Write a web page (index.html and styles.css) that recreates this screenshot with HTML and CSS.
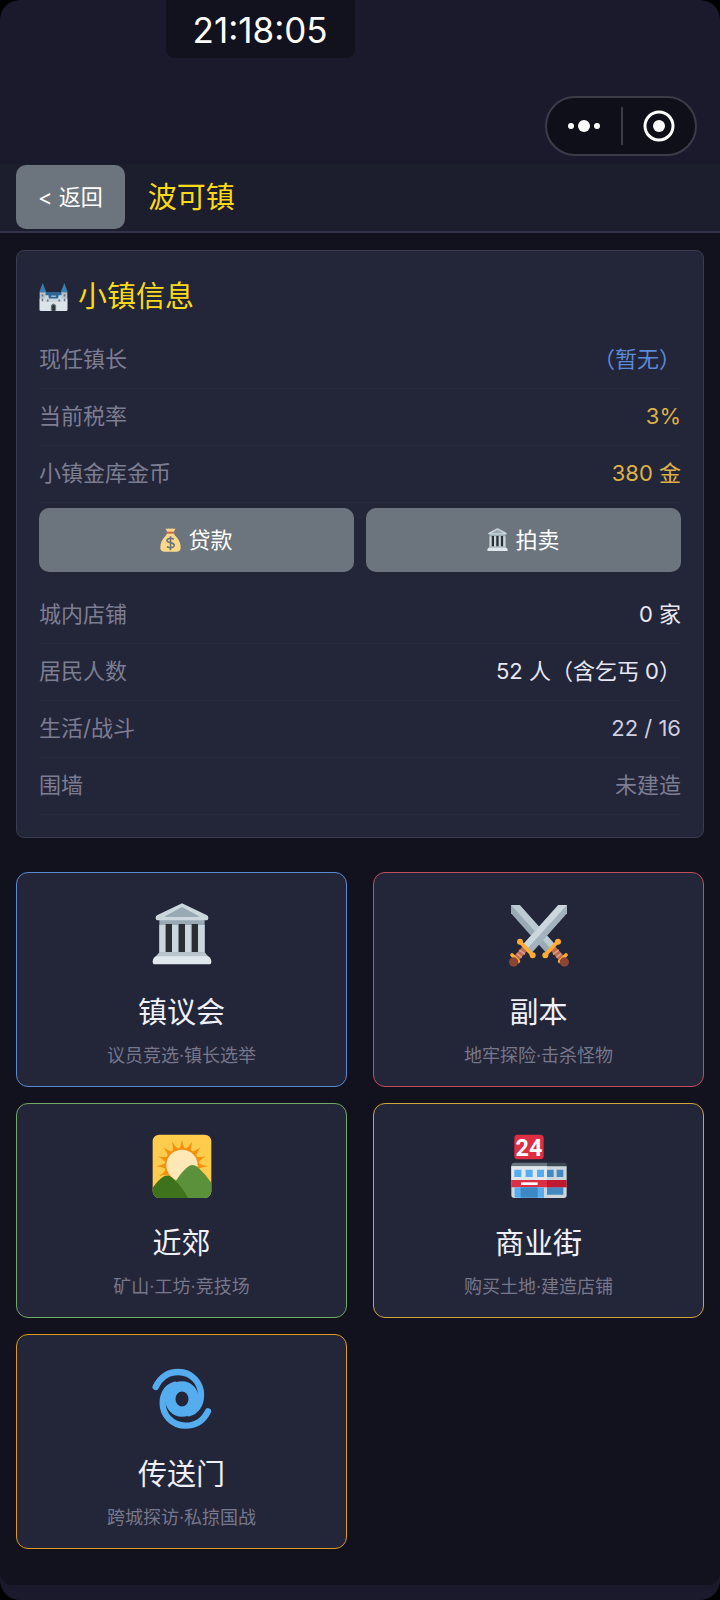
FILE: index.html
```html
<!DOCTYPE html>
<html lang="zh-CN">
<head>
<meta charset="utf-8">
<meta name="viewport" content="width=device-width, initial-scale=1">
<title>波可镇</title>
<link rel="stylesheet" href="styles.css">
</head>
<body>
<svg class="defs" aria-hidden="true">
  <symbol id="hall" viewBox="0 0 180 192" preserveAspectRatio="none">
    <path fill="#99aab5" d="M22 46h136v110H22z"/>
    <path fill="#ccd6dd" d="M22 66h19v82H22zM60 66h19v82H60zM99 66h20v82H99zM138 66h20v82h-20z"/>
    <path fill="#292f33" d="M41 63h19v84H41zM80 63h19v84H80zM119 63h19v84h-19z"/>
    <path fill="#ccd6dd" d="M87 2q3-2 6 0l72 35q4 2 4 7 0 8-7 8H18q-7 0-7-8 0-5 4-7z"/>
    <path fill="#9aaab4" d="M90 12l50 27q2 3-2 3H42q-4 0-2-3z"/>
    <path fill="#b8c5cd" d="M22 148h136l14 16H8z"/>
    <path fill="#e1e8ed" d="M12 160h156q10 6 10 16 0 8-7 8H9q-7 0-7-8 0-10 10-16z"/>
  </symbol>
  <symbol id="swords" viewBox="0 0 180 192" preserveAspectRatio="none">
    <g>
      <path fill="#9aabb5" d="M6 6h26L136 122l-24 28L6 31z"/>
      <path fill="#bccad2" d="M6 6h26L136 122l-12 14z"/>
      <path stroke="#bf6952" stroke-width="19" d="M128 132l33 38"/>
      <path stroke="#d99e82" stroke-width="5" d="M132 154l17-13M142 164l14-13"/>
      <path stroke="#ffac33" stroke-width="11" stroke-linecap="round" d="M109 156l36-39M152 175l19-19"/>
      <circle cx="109" cy="157" r="9" fill="#ffac33"/><circle cx="147" cy="116" r="9" fill="#ffac33"/>
      <circle cx="166" cy="177" r="14" fill="#8a4633"/>
    </g>
    <g transform="matrix(-1 0 0 1 180 0)">
      <path fill="#a3b3bd" d="M6 6h26L136 122l-24 28L6 31z"/>
      <path fill="#ccd6dd" d="M6 6h26L136 122l-12 14z"/>
      <path stroke="#bf6952" stroke-width="19" d="M128 132l33 38"/>
      <path stroke="#d99e82" stroke-width="5" d="M132 154l17-13M142 164l14-13"/>
      <path stroke="#ffac33" stroke-width="11" stroke-linecap="round" d="M109 157l38-41M152 175l19-19"/>
      <circle cx="109" cy="157" r="9" fill="#ffac33"/><circle cx="147" cy="116" r="9" fill="#ffac33"/>
      <circle cx="166" cy="177" r="14" fill="#8a4633"/>
    </g>
  </symbol>
  <symbol id="hills" viewBox="0 0 180 192" preserveAspectRatio="none">
    <clipPath id="tile"><rect x="2" y="2" width="176" height="190" rx="20"/></clipPath>
    <g clip-path="url(#tile)">
      <path fill="#ffcc4d" d="M0 0h180v192H0z"/>
      <g fill="#f4900c">
        <circle cx="90" cy="94" r="52"/>
        <g id="ray4"><path id="ray" d="M79 50q9-16 11-33 2 17 11 33z"/>
        <use href="#ray" transform="rotate(23 90 94)"/><use href="#ray" transform="rotate(46 90 94)"/><use href="#ray" transform="rotate(69 90 94)"/></g>
        <use href="#ray4" transform="rotate(92 90 94)"/><use href="#ray4" transform="rotate(-92 90 94)"/><use href="#ray" transform="rotate(-115 90 94)"/>
      </g>
      <circle cx="90" cy="94" r="47" fill="#ffe8b6"/>
      <path fill="#5c913b" d="M60 160Q88 110 112 95q12-6 25 4 26 24 43 50v43H60z"/>
      <path fill="#3e721d" d="M0 164q20-28 36-37 12-6 25 4 30 28 47 61H0z"/>
    </g>
  </symbol>
  <symbol id="cyclone" viewBox="0 0 180 192" preserveAspectRatio="none">
    <g fill="none" stroke="#55acee">
      <ellipse cx="90" cy="102" rx="35" ry="38" stroke-width="31"/>
      <g stroke-width="19" stroke-linecap="round">
        <path d="M11 66C28 31 56 21 79 21c42 0 68 35 68 68 0 32-16 50-36 56"/>
        <path d="M168 139c-17 34-43 43-67 43-42 0-69-33-69-67 0-32 16-50 36-56"/>
      </g>
    </g>
  </symbol>
  <symbol id="castle" viewBox="0 0 88 88" preserveAspectRatio="none">
    <path fill="#2b6797" d="M14 28h60v22H14z"/>
    <path fill="#3b7fb0" d="M11 0l11 27H1zM77 0l10 27H66z"/>
    <path fill="#b8c5cf" d="M2 28h19v56H2zM67 28h19v56H67z"/>
    <path fill="#dce4ea" d="M2 48h84v32q0 5-5 5H7q-5 0-5-5z"/>
    <path fill="#ccd6dd" d="M19 36h10v7h8v-5h14v5h8v-7h10v22H19z"/>
    <path fill="#2b6797" d="M20 28h48v9H20zM30 42h28v5H30z"/>
    <path fill="#66757f" d="M8 34h5v7H8zM8 48h5v7H8zM75 34h5v7h-5zM75 48h5v7h-5zM24 50h5v6h-5zM59 50h5v6h-5zM36 84V68q8-12 16 0v16z"/>
    <path fill="#292f33" d="M40 84V70q4-6 8 0v14z"/>
  </symbol>
  <symbol id="money" viewBox="0 0 64 72" preserveAspectRatio="none">
    <path fill="#fdd888" d="M22 14h20q1 7 8 13c9 9 13 21 13 32 0 9-7 12-14 12H15C8 71 1 68 1 59c0-11 4-23 13-32q7-6 8-13z"/>
    <path fill="#fdd888" d="M17 1q6 3 10 0 5 3 10 0 5 3 10 0l-5 12H22z"/>
    <path fill="#bf6952" d="M20 11h24v6H20z"/>
    <path fill="none" stroke="#67757f" stroke-width="5" d="M42 34q-10-6-18-1c-5 4-4 9 8 11 14 3 14 10 7 14q-9 3-18-2M32 25v42"/>
  </symbol>
</svg>

<div class="screen">
  <header class="top">
    <div class="status"><time class="clock">21:18:05</time></div>
    <div class="capsule">
      <button class="capsule-btn" type="button" aria-label="更多">
        <svg class="dots" viewBox="0 0 34 16"><circle cx="4" cy="8" r="3"/><circle cx="17" cy="8" r="6"/><circle cx="30" cy="8" r="3"/></svg>
      </button>
      <button class="capsule-btn" type="button" aria-label="关闭">
        <svg class="ring" viewBox="0 0 32 32"><circle cx="16" cy="16" r="14" fill="none" stroke="#fff" stroke-width="3"/><circle cx="16" cy="16" r="6"/></svg>
      </button>
    </div>
    <nav class="bar">
      <button class="btn back" type="button">&lt; 返回</button>
      <h1 class="title">波可镇</h1>
    </nav>
  </header>

  <main class="content">
    <section class="panel">
      <h2 class="title"><svg class="castle"><use href="#castle"/></svg>小镇信息</h2>
      <dl class="rows">
        <div class="row"><dt>现任镇长</dt><dd class="blue">（暂无）</dd></div>
        <div class="row"><dt>当前税率</dt><dd class="gold">3%</dd></div>
        <div class="row"><dt>小镇金库金币</dt><dd class="gold">380 金</dd></div>
      </dl>
      <div class="actions">
        <button class="btn" type="button"><svg class="mini"><use href="#money"/></svg>贷款</button>
        <button class="btn" type="button"><svg class="mini"><use href="#hall"/></svg>拍卖</button>
      </div>
      <dl class="rows">
        <div class="row"><dt>城内店铺</dt><dd>0 家</dd></div>
        <div class="row"><dt>居民人数</dt><dd>52 人（含乞丐 0）</dd></div>
        <div class="row"><dt>生活/战斗</dt><dd class="soft">22 / 16</dd></div>
        <div class="row"><dt>围墙</dt><dd class="muted">未建造</dd></div>
      </dl>
    </section>

    <section class="places">
      <button class="place council" type="button"><svg class="icon"><use href="#hall"/></svg><span class="name">镇议会</span><span class="desc">议员竞选·镇长选举</span></button>
      <button class="place dungeon" type="button"><svg class="icon"><use href="#swords"/></svg><span class="name">副本</span><span class="desc">地牢探险·击杀怪物</span></button>
      <button class="place suburb" type="button"><svg class="icon"><use href="#hills"/></svg><span class="name">近郊</span><span class="desc">矿山·工坊·竞技场</span></button>
      <button class="place market" type="button">
        <svg class="icon" viewBox="0 0 180 192" preserveAspectRatio="none">
          <rect x="16" y="2" width="88" height="74" rx="10" fill="#dd2e44"/>
          <text x="60" y="65" class="store-sign">24</text>
          <path fill="#66757f" d="M7 100V95q0-9 9-9h98v14z"/>
          <path fill="#3b4750" d="M114 86h52q7 0 7 9v5h-59z"/>
          <path fill="#ccd6dd" d="M7 97h107v95H16q-9 0-9-9z"/>
          <path fill="#e1e8ed" d="M7 97h107v42H7z"/>
          <path fill="#ccd6dd" d="M114 97h59v86q0 9-8 9h-51z"/>
          <path fill="#55acee" d="M16 107h21v22H16zM50 107h21v22H50zM84 107h21v22H84z"/>
          <path fill="#4289c1" d="M114 107h20v22h-20zM143 107h20v22h-20zM114 160h49v22h-49z"/>
          <path fill="#dd2e44" d="M7 138h107v22H7z"/>
          <path fill="#be1931" d="M114 138h59v22h-59z"/>
          <path fill="#fff" d="M36 145h50v8H36z"/>
          <path fill="#55acee" d="M17 160h88v31H17z"/>
          <path fill="#3b88c3" d="M35 160h51v31H35z"/>
        </svg>
        <span class="name">商业街</span><span class="desc">购买土地·建造店铺</span></button>
      <button class="place portal" type="button"><svg class="icon"><use href="#cyclone"/></svg><span class="name">传送门</span><span class="desc">跨城探访·私掠国战</span></button>
    </section>
  </main>
</div>
</body>
</html>
```

FILE: styles.css
```css
* { box-sizing: border-box; margin: 0; }

body {
  background: #000;
  color: #e8e8f4;
  font: 22px/32px Inter, "Noto Sans CJK SC", sans-serif;
  text-spacing-trim: space-all;
}

button { font: inherit; color: inherit; cursor: pointer; }

.defs { position: absolute; width: 0; height: 0; }

.screen {
  display: flex;
  flex-direction: column;
  min-height: 100vh;
  padding-bottom: 15px;
  border-radius: 20px;
  overflow: hidden;
  background: #1a1a2c;
}

.top { display: flex; flex-direction: column; }

.status { display: flex; padding-left: 23%; }

.clock {
  padding: 6px 27px 4px;
  border-radius: 0 0 8px 8px;
  background: #12121e;
  color: #fff;
  font-size: 35px;
  line-height: 48px;
}

.capsule {
  display: flex;
  align-self: flex-end;
  align-items: center;
  height: 60px;
  margin: 38px 23px 8px 0;
  border: 2px solid #3c3c48;
  border-radius: 30px;
  background: #0f0f19;
}

.capsule-btn {
  display: flex;
  align-items: center;
  justify-content: center;
  width: 74px;
  height: 38px;
  padding: 0;
  border: 0;
  background: none;
  fill: #fff;
}

.capsule-btn + .capsule-btn { border-left: 2px solid #3c3c48; }
.dots { width: 34px; height: 16px; }
.ring { width: 32px; height: 32px; }

.bar {
  display: flex;
  align-items: center;
  gap: 23px;
  padding: 1px 16px 2px;
  border-bottom: 2px solid #32324a;
  background: #1c1d2d;
}

.title {
  display: flex;
  align-items: center;
  padding-top: 1px;
  color: #fada16;
  font-size: 29px;
  font-weight: 400;
  line-height: 42px;
}

.btn {
  display: flex;
  align-items: center;
  justify-content: center;
  gap: 7px;
  padding: 16px;
  border: 0;
  border-radius: 10px;
  background: #6c757d;
  color: #fff;
}

.back { padding: 16px 22px; }

.content {
  flex: 1;
  padding: 17px 16px 36px;
  border-radius: 0 0 12px 12px;
  background: #12121e;
}

.panel {
  padding: 24px 22px 22px;
  border: 1px solid #3a3a50;
  border-radius: 8px;
  background: #232539;
}

.panel .title { gap: 10px; margin-bottom: 14px; }
.castle { width: 29px; height: 29px; }

.row {
  display: flex;
  align-items: center;
  justify-content: space-between;
  padding: 11px 0 13px;
  border-bottom: 1px solid #282a3d;
}

.row dt, .row .muted { color: #7d7d91; }
.row .blue { color: #5b8ad8; }
.row .gold { color: #deb048; }
.row .soft { color: #cfcfe0; }

.actions {
  display: grid;
  grid-template-columns: 1fr 1fr;
  gap: 12px;
  margin: 5px 0 15px;
}

.mini { width: 21px; height: 24px; }

.places {
  display: grid;
  grid-template-columns: 1fr 1fr;
  gap: 16px 26px;
  margin-top: 34px;
}

.place {
  display: flex;
  flex-direction: column;
  align-items: center;
  padding: 30px 16px 16px;
  border: 1px solid;
  border-radius: 12px;
  background: #232539;
}

.icon { width: 60px; height: 64px; }

.name {
  margin-top: 25px;
  color: #f0f0fa;
  font-size: 29px;
  line-height: 42px;
}

.desc { margin-top: 8px; color: #77778b; font-size: 18px; line-height: 28px; }

.council { border-color: #5b8ad0; }
.dungeon { border-color: #c44d5c; }
.suburb { border-color: #72a866; }
.market { border-color: #cfa540; }
.portal { border-color: #dc9a20; }

.store-sign {
  fill: #fff;
  font: 700 70px Roboto, sans-serif;
  text-anchor: middle;
}
```
